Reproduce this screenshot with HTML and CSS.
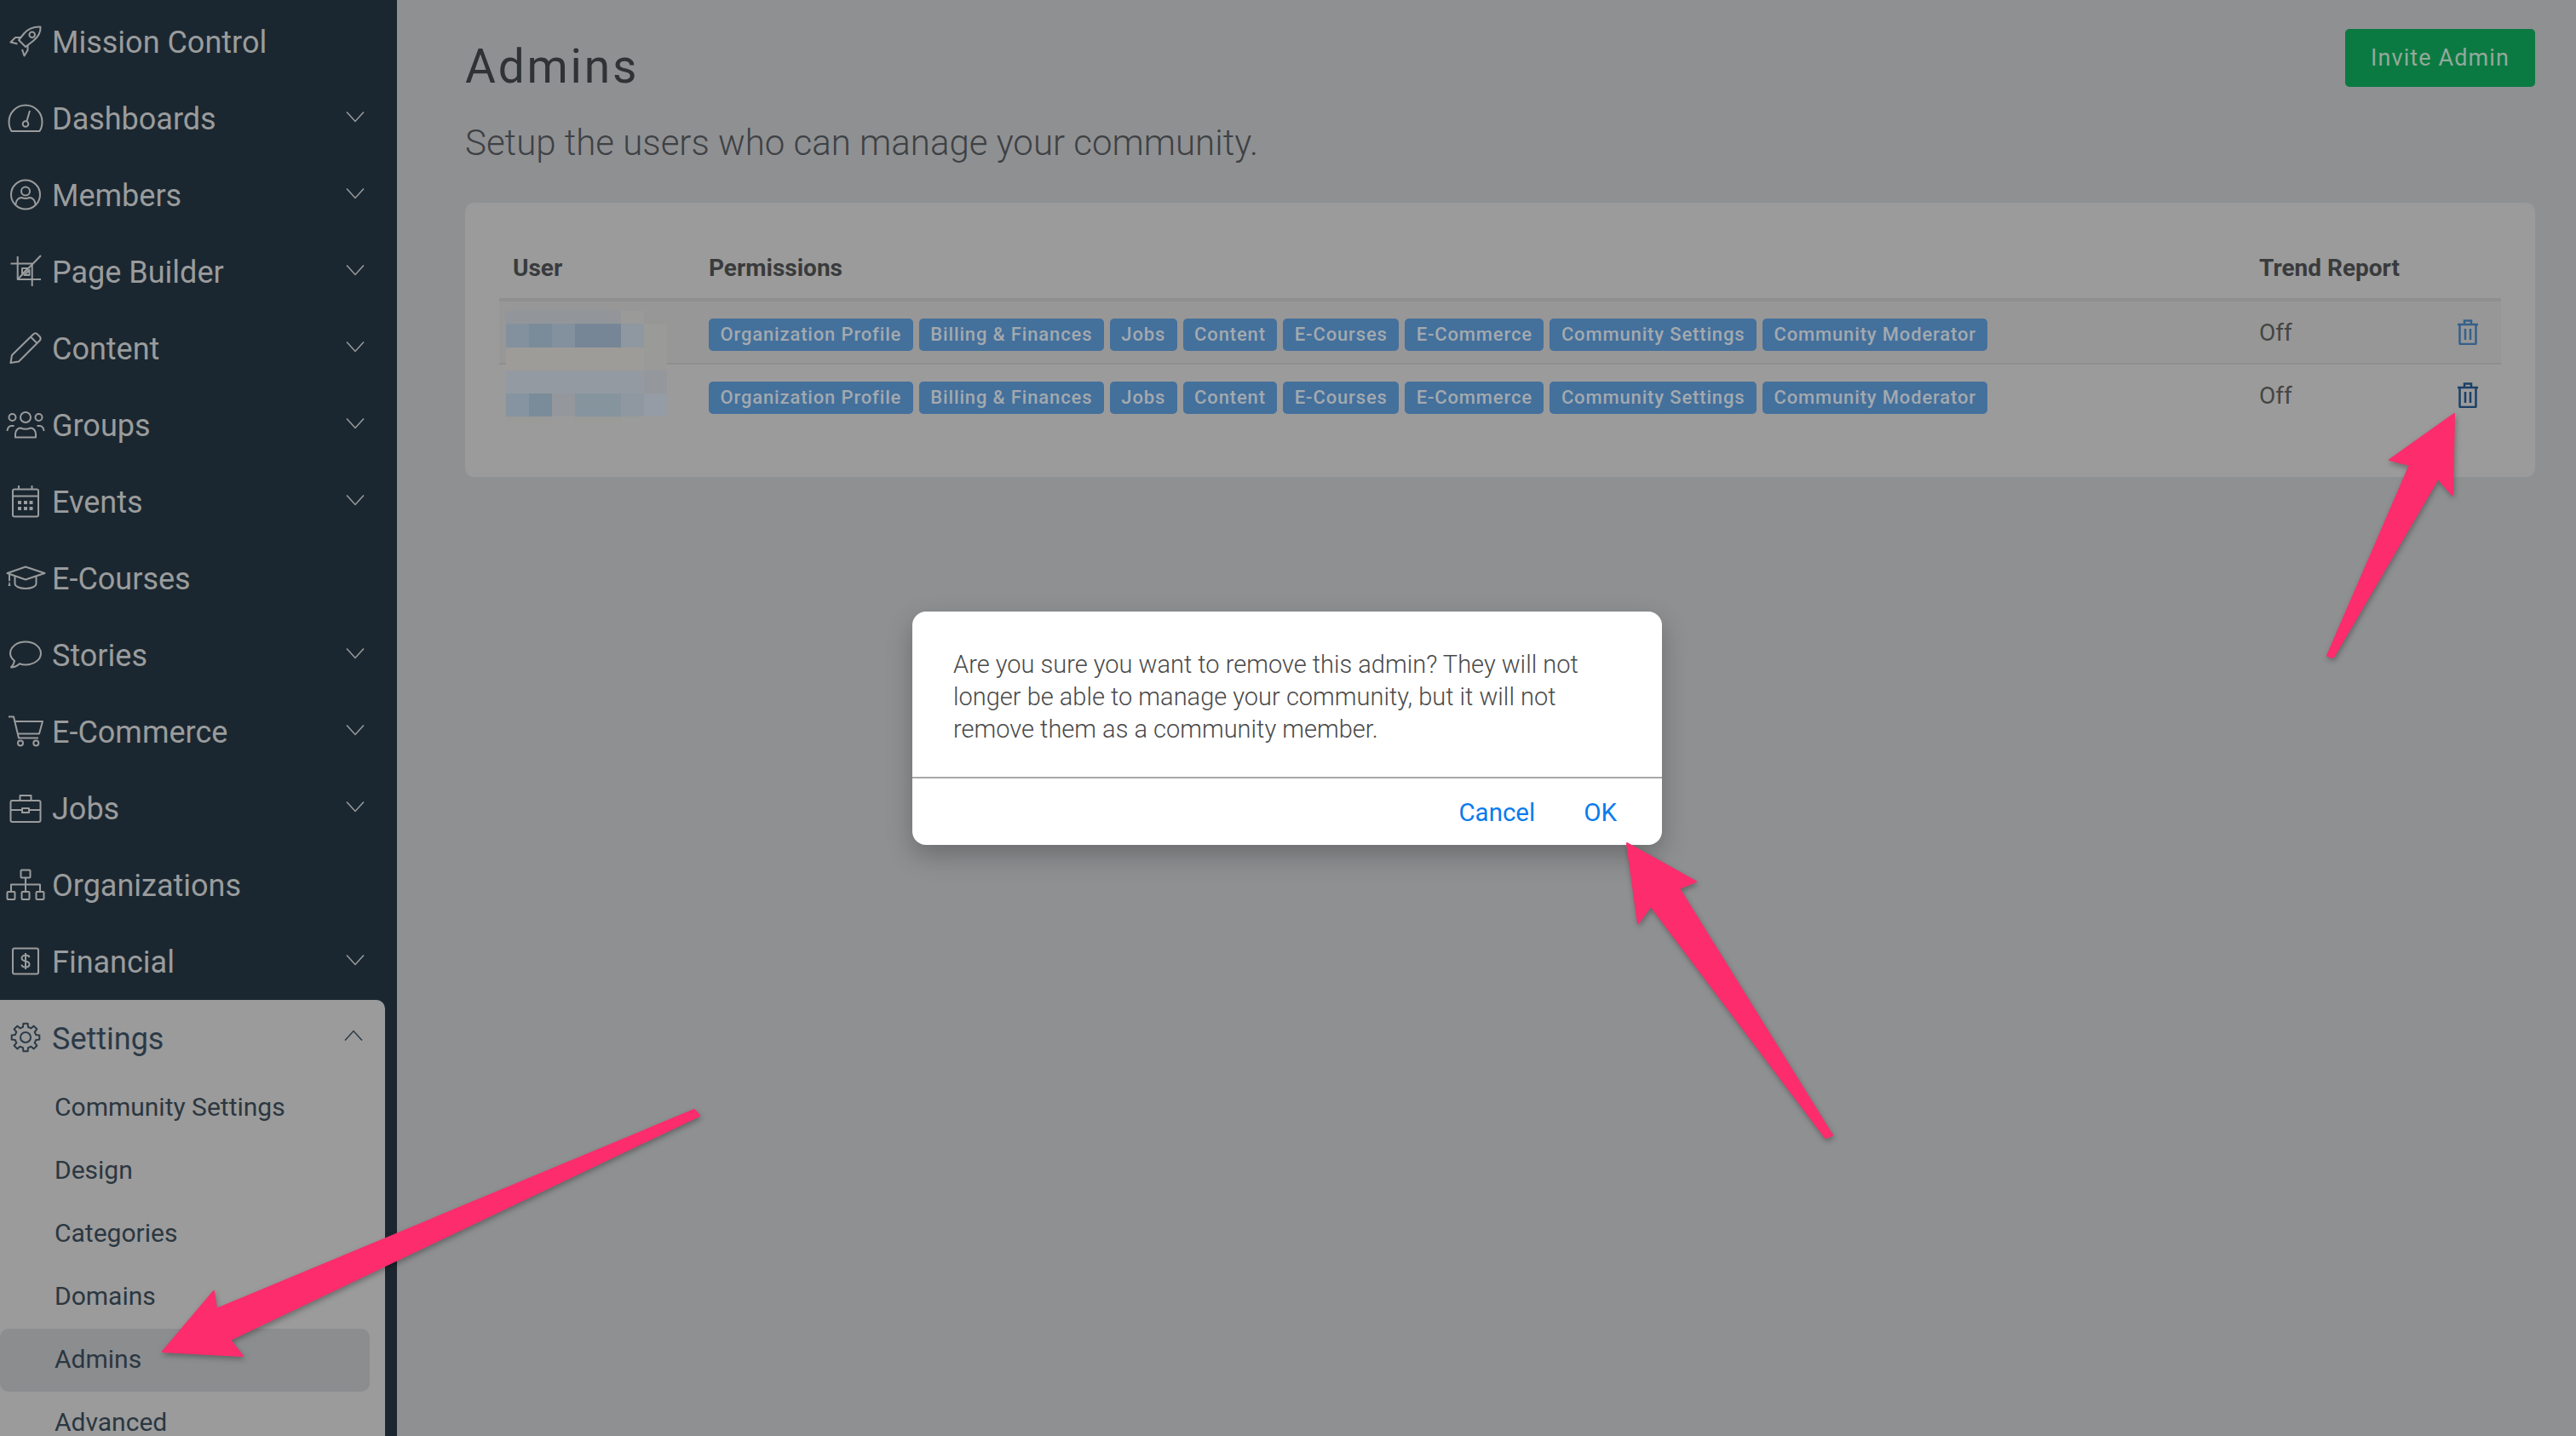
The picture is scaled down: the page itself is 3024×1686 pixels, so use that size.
FILE: index.html
```html
<!DOCTYPE html>
<html lang="en">
<head>
<meta charset="utf-8">
<title>Admins</title>
<link rel="stylesheet" href="styles.css">
</head>
<body>
<div class="app">
  <aside class="sidebar">
    <nav class="nav">
      <a class="nav-item"><svg class="icon" viewBox="0 0 46 46"><path d="M40.5 5.5C32 5 26 8 21.5 13L15 21l8 8 9-7C38 17 41 12 40.5 5.5Z"/><path d="M17 18h-6l-5.5 5.5 8 2"/><path d="M25.500 27v6l-4 6.500-2.500-7.500"/><circle cx="30.700" cy="14.700" r="3.300"/></svg><span class="nav-label">Mission Control</span></a>
      <a class="nav-item"><svg class="icon" viewBox="0 0 46 46"><path d="M6.500 38C4.500 35 3.500 31.500 3.500 27a19.500 19.500 0 0 1 39 0c0 4.500-1 8-3 11Z"/><circle cx="23" cy="29.500" r="3.300"/><path d="M28 14l-3.500 12"/></svg><span class="nav-label">Dashboards</span><svg class="chev" viewBox="0 0 22 14"><path d="M1 1.500l10 11 10-11"/></svg></a>
      <a class="nav-item"><svg class="icon" viewBox="0 0 46 46"><circle cx="23" cy="22.500" r="17"/><circle cx="23" cy="18.500" r="5"/><path d="M11.500 34c0-5 3.500-8 7-8 2.800 1.300 6.200 1.300 9 0 3.500 0 7 3 7 8"/></svg><span class="nav-label">Members</span><svg class="chev" viewBox="0 0 22 14"><path d="M1 1.500l10 11 10-11"/></svg></a>
      <a class="nav-item"><svg class="icon" viewBox="0 0 46 46"><path d="M5.500 13.500H30.700V40"/><path d="M13.700 5V32H41"/><path d="M41 4L13.700 32"/><path d="M19 19h7l-7 7Z"/><path d="M27.500 21v6h-6Z"/></svg><span class="nav-label">Page Builder</span><svg class="chev" viewBox="0 0 22 14"><path d="M1 1.500l10 11 10-11"/></svg></a>
      <a class="nav-item"><svg class="icon" viewBox="0 0 46 46"><path d="M5.500 40L7 31 32 6.500c1.500-1.500 3-1.500 4.500-.5L40 9.500c1 1.500 1 3-.5 4.500L15 38.500Z"/><path d="M29 9.500l7.500 7.500"/></svg><span class="nav-label">Content</span><svg class="chev" viewBox="0 0 22 14"><path d="M1 1.500l10 11 10-11"/></svg></a>
      <a class="nav-item"><svg class="icon" viewBox="0 0 46 46"><circle cx="23" cy="14" r="6"/><circle cx="7.500" cy="14" r="4"/><circle cx="38.500" cy="14" r="4"/><path d="M11 37.500v-4c0-4 3-7 6-7 3.500 1.500 8.500 1.500 12 0 3 0 6 3 6 7v4Z"/><path d="M1.500 30c0-3 2-6 5-6h3"/><path d="M44.500 30c0-3-2-6-5-6h-3"/></svg><span class="nav-label">Groups</span><svg class="chev" viewBox="0 0 22 14"><path d="M1 1.500l10 11 10-11"/></svg></a>
      <a class="nav-item"><svg class="icon" viewBox="0 0 46 46"><rect x="8" y="8.500" width="30" height="32" rx="2"/><path d="M8 16.500h30M15 4v4.500M30.500 4v4.500"/><path class="solid" d="M14 22h4v4h-4zM21 22h4v4h-4zM27.500 22h4v4h-4zM14 29h4v4h-4zM21 29h4v4h-4zM27.500 29h4v4h-4z"/></svg><span class="nav-label">Events</span><svg class="chev" viewBox="0 0 22 14"><path d="M1 1.500l10 11 10-11"/></svg></a>
      <a class="nav-item"><svg class="icon" viewBox="0 0 46 46"><path d="M23 9.500l22.500 7.500L23 24.500 1.500 17Z"/><path d="M10.500 21v8c0 4 6.500 6 12.500 6s12.500-2 12.500-6v-8"/><path d="M4 18v8"/><path class="solid" d="M2.500 32L4 26l1.500 6Z"/></svg><span class="nav-label">E-Courses</span></a>
      <a class="nav-item"><svg class="icon" viewBox="0 0 46 46"><path d="M23 7.500c10 0 18 6 18 13.500s-8 13.500-18 13.500c-2.500 0-5-.5-7-1.300-3 2.800-6.500 4.300-10 4.300 2-2 3.500-5 4-7.500-3-2.500-5-5.500-5-9C5 13.500 13 7.500 23 7.500Z"/></svg><span class="nav-label">Stories</span><svg class="chev" viewBox="0 0 22 14"><path d="M1 1.500l10 11 10-11"/></svg></a>
      <a class="nav-item"><svg class="icon" viewBox="0 0 46 46"><path d="M3 5.500h6l6 25h23"/><path d="M10.500 11H43l-4 14.500H14"/><circle cx="17" cy="36.500" r="3"/><circle cx="35.300" cy="36.500" r="3"/></svg><span class="nav-label">E-Commerce</span><svg class="chev" viewBox="0 0 22 14"><path d="M1 1.500l10 11 10-11"/></svg></a>
      <a class="nav-item"><svg class="icon" viewBox="0 0 46 46"><rect x="5.500" y="14" width="35" height="25" rx="2"/><path d="M16.500 14V8h13v6"/><path d="M5.500 25H19M27 25h13.500"/><rect x="19" y="23" width="8" height="5"/></svg><span class="nav-label">Jobs</span><svg class="chev" viewBox="0 0 22 14"><path d="M1 1.500l10 11 10-11"/></svg></a>
      <a class="nav-item"><svg class="icon" viewBox="0 0 46 46"><rect x="17.500" y="5.500" width="11" height="9" rx="1"/><path d="M23 14.500V31M6 31v-8.500h34V31"/><rect x="1.500" y="31" width="9" height="9" rx="1"/><rect x="18.500" y="31" width="9" height="9" rx="1"/><rect x="35.500" y="31" width="9" height="9" rx="1"/></svg><span class="nav-label">Organizations</span></a>
      <a class="nav-item"><svg class="icon" viewBox="0 0 46 46"><rect x="8" y="7.500" width="30" height="30" rx="2"/><path d="M27.500 18c-.5-2-2.500-2.500-4.500-2.500-2.500 0-4.500 1.500-4.500 3.500 0 5 9 2 9 7 0 2.500-2 3.500-4.500 3.500s-4.500-1-4.500-3M23 13v19"/></svg><span class="nav-label">Financial</span><svg class="chev" viewBox="0 0 22 14"><path d="M1 1.500l10 11 10-11"/></svg></a>
      <div class="nav-open">
        <a class="nav-item nav-item-open"><svg class="icon" viewBox="0 0 46 46"><path d="M39.300 24.580V19.420L35.130 18.980 33.710 15.560 36.350 12.300 32.700 8.650 29.440 11.290 26.020 9.870 25.580 5.700H20.420L19.980 9.870 16.560 11.290 13.300 8.650 9.650 12.300 12.290 15.560 10.870 18.980 6.700 19.420V24.580L10.870 25.020 12.290 28.440 9.650 31.700 13.300 35.350 16.560 32.710 19.980 34.130 20.420 38.300H25.580L26.020 34.130 29.440 32.710 32.700 35.350 36.350 31.700 33.710 28.440 35.130 25.020Z"/><circle cx="23" cy="22" r="6"/></svg><span class="nav-label">Settings</span><svg class="chev chev-up" viewBox="0 0 22 14"><path d="M1 12.500l10-11 10 11"/></svg></a>
        <a class="sub-item">Community Settings</a>
        <a class="sub-item">Design</a>
        <a class="sub-item">Categories</a>
        <a class="sub-item">Domains</a>
        <a class="sub-item sub-item-active">Admins</a>
        <a class="sub-item">Advanced</a>
      </div>
    </nav>
  </aside>
  <main class="main">
    <header class="page-head">
      <div>
        <h1 class="page-title">Admins</h1>
        <p class="page-sub">Setup the users who can manage your community.</p>
      </div>
      <button class="btn-invite">Invite Admin</button>
    </header>
    <section class="card">
      <div class="mosaic">
        <i class="m0"></i><i class="m0"></i><i class="m0"></i><i class="m0"></i><i class="m0"></i><i class="m5"></i><i></i>
        <i class="m1"></i><i class="m2"></i><i class="m1"></i><i class="m3"></i><i class="m3"></i><i class="m4"></i><i class="m5"></i>
        <i class="m6"></i><i class="m6"></i><i class="m6"></i><i class="m6"></i><i class="m6"></i><i class="m6"></i><i class="m5"></i>
        <i class="m7"></i><i class="m7"></i><i class="m7"></i><i class="m7"></i><i class="m7"></i><i class="m7"></i><i class="m10"></i>
        <i class="m8"></i><i class="m2"></i><i class="m10"></i><i class="m9"></i><i class="m9"></i><i class="m4"></i><i class="m11"></i>
        <i class="m5"></i><i class="m5"></i><i></i><i class="m5"></i><i class="m5"></i><i></i><i></i>
      </div>
      <div class="row row-head">
        <div class="cell-user">User</div>
        <div class="cell-perms">Permissions</div>
        <div class="cell-trend">Trend Report</div>
      </div>
      <div class="row row-odd">
        <div class="cell-user"></div>
        <div class="cell-perms tags">
          <span class="tag">Organization Profile</span><span class="tag">Billing &amp; Finances</span><span class="tag">Jobs</span><span class="tag">Content</span><span class="tag">E-Courses</span><span class="tag">E-Commerce</span><span class="tag">Community Settings</span><span class="tag">Community Moderator</span>
        </div>
        <div class="cell-trend off">Off</div>
        <svg class="trash" viewBox="0 0 26 30"><path d="M1 6h24M9 5V1.500h8V5M3.500 6v22a1 1 0 0 0 1 1h17a1 1 0 0 0 1-1V6M10 11v13M16 11v13"/></svg>
      </div>
      <div class="row">
        <div class="cell-user"></div>
        <div class="cell-perms tags">
          <span class="tag">Organization Profile</span><span class="tag">Billing &amp; Finances</span><span class="tag">Jobs</span><span class="tag">Content</span><span class="tag">E-Courses</span><span class="tag">E-Commerce</span><span class="tag">Community Settings</span><span class="tag">Community Moderator</span>
        </div>
        <div class="cell-trend off">Off</div>
        <svg class="trash trash-hover" viewBox="0 0 26 30"><path d="M1 6h24M9 5V1.500h8V5M3.500 6v22a1 1 0 0 0 1 1h17a1 1 0 0 0 1-1V6M10 11v13M16 11v13"/></svg>
      </div>
    </section>
  </main>
</div>
<div class="dialog">
  <p class="dialog-text">Are you sure you want to remove this admin? They will not longer be able to manage your community, but it will not remove them as a community member.</p>
  <div class="dialog-actions"><a class="dialog-btn">Cancel</a><a class="dialog-btn">OK</a></div>
</div>
<svg class="arrows" viewBox="0 0 3024 1686">
  <polygon points="191,1587 251,1516 254,1537 815,1303 821,1310 270,1573 285,1592"/>
  <polygon points="1910,990 1991,1035 1971,1043 2151,1333 2143,1336 1938,1064 1923,1084"/>
  <polygon points="2881,486 2879,581 2862,562 2739,772 2732,770 2829,546 2805,540"/>
</svg>
</body>
</html>
```
FILE: styles.css
```css
* { box-sizing: border-box; }
html, body { margin: 0; padding: 0; }
body {
  width: 3024px;
  height: 1686px;
  overflow: hidden;
  position: relative;
  font-family: Roboto, "Liberation Sans", sans-serif;
  background: #8f9092;
}
.app { display: flex; height: 1686px; }
.sidebar {
  width: 466px;
  flex: none;
  background: #1b2730;
  overflow: hidden;
  padding-top: 4px;
}
.nav { display: flex; flex-direction: column; }
.nav-item {
  display: flex;
  align-items: center;
  height: 90px;
  padding-left: 7px;
  color: #9a9c9d;
  font-size: 36px;
}
.icon {
  width: 46px;
  height: 46px;
  flex: none;
  margin-right: 8px;
  fill: none;
  stroke: #9a9c9d;
  stroke-width: 2;
  stroke-linejoin: round;
  overflow: visible;
}
.icon .solid { fill: #9a9c9d; stroke: none; }
.nav-label { flex: 1; padding-top: 2px; }
.chev {
  width: 22px;
  height: 14px;
  flex: none;
  margin-right: 38px;
  margin-bottom: 4px;
  fill: none;
  stroke: #9a9c9d;
  stroke-width: 1.5;
}
.nav-open {
  width: 452px;
  background: #9b9b9b;
  border-radius: 0 10px 0 0;
  height: 600px;
}
.nav-item-open { color: #2b3a47; }
.nav-item-open .icon { stroke: #2b3a47; }
.chev-up { stroke: #2b3a47; margin-right: 26px; margin-bottom: 6px; }
.sub-item {
  display: flex;
  align-items: center;
  width: 434px;
  height: 74px;
  padding: 0 0 3px 64px;
  font-size: 30px;
  color: #2b3741;
  border-radius: 10px;
}
.sub-item-active { background: #8c8d8f; }
.main { flex: 1; padding: 0 48px 0 80px; }
.page-head {
  display: flex;
  justify-content: space-between;
  align-items: flex-start;
  height: 238px;
  padding-top: 34px;
}
.page-title {
  margin: 12px 0 0;
  font-size: 55px;
  line-height: 64px;
  font-weight: 400;
  letter-spacing: 2.800px;
  color: #2f3336;
}
.page-sub {
  margin: 33px 0 0;
  font-size: 42px;
  line-height: 50px;
  font-weight: 300;
  color: #3d4144;
}
.btn-invite {
  width: 223px;
  height: 68px;
  border: 0;
  padding: 0;
  border-radius: 5px;
  background: #0b7a42;
  color: #93a99b;
  font-family: Roboto, sans-serif;
  font-size: 27px;
  letter-spacing: 1.100px;
}
.card {
  position: relative;
  height: 322px;
  padding: 40px 40px 0;
  background: #9b9b9b;
  border-radius: 10px;
}
.row {
  position: relative;
  display: flex;
  align-items: flex-start;
  height: 74px;
  padding-top: 20px;
}
.row-head {
  height: 76px;
  padding-top: 0;
  align-items: center;
  border-bottom: 4px solid #8f8f8f;
  font-size: 28px;
  font-weight: 700;
  color: #393b3d;
}
.row-odd { background: #979797; border-bottom: 2px solid #8f8f8f; }
.cell-user { width: 246px; flex: none; padding-left: 16px; }
.cell-perms { width: 1820px; flex: none; }
.tags { display: flex; gap: 7px; }
.tag {
  height: 38px;
  line-height: 38px;
  padding: 0 13.500px;
  background: #44709c;
  border-radius: 5px;
  font-size: 22px;
  font-weight: 500;
  letter-spacing: .85px;
  color: #a3a9ae;
  white-space: nowrap;
}
.off { font-size: 28px; line-height: 38px; color: #454545; margin-top: -2px; }
.trash {
  position: absolute;
  left: 2298px;
  top: 21px;
  width: 26px;
  height: 30px;
  fill: none;
  stroke: #36608a;
  stroke-width: 2.500;
}
.trash-hover { stroke: #1b4068; }
.mosaic {
  position: absolute;
  left: 48px;
  top: 127px;
  display: grid;
  grid-template-columns: repeat(7, 27px);
  grid-template-rows: 15px 28px 27px 27px 27px 8px;
  z-index: 1;
}
.m0 { background: #92969b; }
.m1 { background: #83919e; }
.m2 { background: #7a8c99; }
.m3 { background: #778696; }
.m4 { background: #8f98a0; }
.m5 { background: #9a9a98; }
.m6 { background: #9e9c98; }
.m7 { background: #939aa1; }
.m8 { background: #8594a0; }
.m9 { background: #86949e; }
.m10 { background: #94989d; }
.m11 { background: #969ca5; }
.dialog {
  position: absolute;
  left: 1071px;
  top: 718px;
  width: 880px;
  height: 274px;
  background: #fff;
  border-radius: 16px;
  box-shadow: 0 12px 30px rgba(0, 0, 0, .25);
  z-index: 2;
}
.dialog-text {
  margin: 0;
  height: 196px;
  padding: 43px 48px 0;
  font-size: 29px;
  line-height: 38px;
  color: #4a4a4a;
  font-weight: 300;
  border-bottom: 2px solid #a8a8a8;
}
.dialog-actions {
  display: flex;
  justify-content: flex-end;
  gap: 57px;
  padding: 20px 53px 0 0;
}
.dialog-btn { font-size: 29.500px; line-height: 40px; color: #0a7bec; }
.arrows {
  position: absolute;
  left: 0;
  top: 0;
  width: 3024px;
  height: 1686px;
  fill: #fd2c6d;
  stroke: #fd2c6d;
  stroke-width: 2;
  stroke-linejoin: round;
  z-index: 3;
  filter: drop-shadow(1px 3px 3px rgba(0, 0, 0, .3));
}
```
